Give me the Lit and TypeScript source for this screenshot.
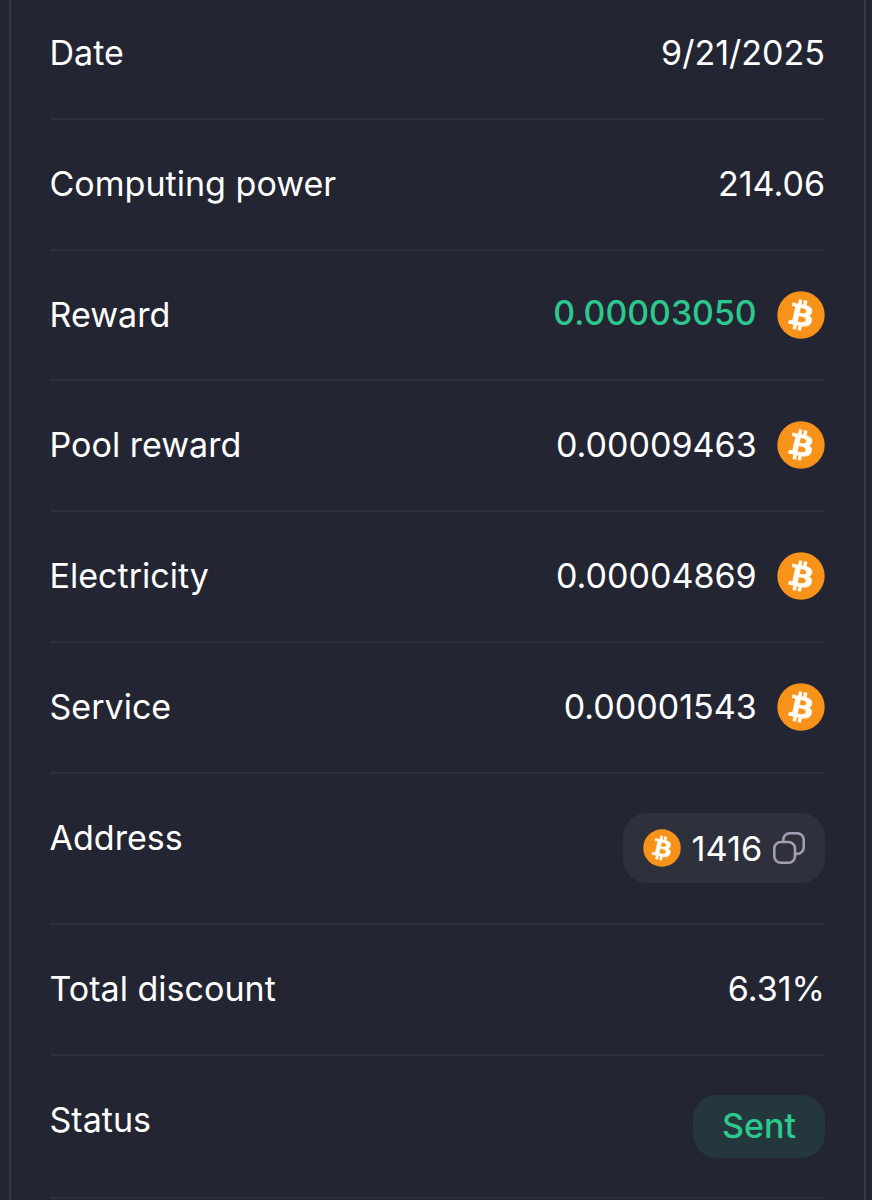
import { LitElement, html, css, nothing } from "lit";
import { customElement, property } from "lit/decorators.js";

@customElement("btc-icon")
class BtcIcon extends LitElement {
  static styles = css`
    :host { display: block; flex: none; }
    svg { display: block; width: 100%; height: 100%; }
  `;
  render() {
    return html`<svg viewBox="0 0 32 32" aria-hidden="true">
      <circle cx="16" cy="16" r="15.8" fill="#f7931a"></circle>
      <path transform="rotate(-2 16 16) translate(-1.45 -0.5) scale(1.07 1.03)" fill="#fffdf6" stroke="#fffdf6" stroke-width="0.4" d="M23.189 14.02c.314-2.096-1.283-3.223-3.465-3.975l.708-2.84-1.728-.43-.69 2.765c-.454-.114-.92-.22-1.385-.326l.695-2.783L15.596 6l-.708 2.839c-.376-.086-.746-.17-1.104-.26l.002-.009-2.384-.595-.46 1.846s1.283.294 1.256.312c.7.175.826.638.805 1.006l-.806 3.235c.048.012.11.03.18.057l-.183-.045-1.13 4.532c-.086.212-.303.531-.793.41.018.025-1.256-.313-1.256-.313l-.858 1.978 2.25.561c.418.105.828.215 1.231.318l-.715 2.872 1.727.43.708-2.84c.472.127.93.245 1.378.357l-.706 2.828 1.728.43.715-2.866c2.948.558 5.164.333 6.097-2.333.752-2.146-.037-3.385-1.588-4.192 1.13-.26 1.98-1.003 2.207-2.538zm-3.95 5.538c-.533 2.147-4.148.986-5.32.695l.95-3.805c1.172.293 4.929.872 4.37 3.11zm.535-5.569c-.487 1.953-3.495.96-4.47.717l.86-3.45c.975.243 4.118.696 3.61 2.733z"></path>
    </svg>`;
  }
}

@customElement("detail-row")
class DetailRow extends LitElement {
  @property() label = "";
  static styles = css`
    :host {
      display: flex;
      justify-content: space-between;
      align-items: flex-start;
      box-sizing: border-box;
      height: 130.83px;
      padding-top: 40px;
      border-bottom: 2px solid #2d2f3b;
    }
    :host([kind="address"]) { height: 151px; }
    :host([kind="status"]) { height: 142.8px; }
    :host([kind="address"]), :host([kind="status"]) { padding-top: 39px; }
    .label { line-height: 48px; }
    :host([kind="address"]) .label, :host([kind="status"]) .label { padding-top: 1px; }
  `;
  render() {
    return html`<span class="label">${this.label}</span><slot></slot>`;
  }
}

interface Entry {
  label: string;
  value: string;
  kind?: "coin" | "reward" | "address" | "status";
}

const entries: Entry[] = [
  { label: "Date", value: "9/21/2025" },
  { label: "Computing power", value: "214.06" },
  { label: "Reward", value: "0.00003050", kind: "reward" },
  { label: "Pool reward", value: "0.00009463", kind: "coin" },
  { label: "Electricity", value: "0.00004869", kind: "coin" },
  { label: "Service", value: "0.00001543", kind: "coin" },
  { label: "Address", value: "1416", kind: "address" },
  { label: "Total discount", value: "6.31%" },
  { label: "Status", value: "Sent", kind: "status" },
];

@customElement("app-root")
class AppRoot extends LitElement {
  static styles = css`
    :host {
      display: block;
      box-sizing: border-box;
      height: 1200px;
      overflow: hidden;
      padding: 0 6px 0 9px;
      background: #242532;
      color: #fff;
      font-family: Inter, sans-serif;
      font-size: 34.05px;
      font-optical-sizing: none;
    }
    .card {
      box-sizing: border-box;
      height: 1200px;
      border: solid #383a47;
      border-width: 0 2px;
      border-left-color: #343642;
      padding: 0 39px 0 38.5px;
      overflow: hidden;
    }
    .list { margin-top: -11.1px; }
    .value { line-height: 48px; }
    .coin { display: flex; align-items: center; gap: 20.3px; line-height: 48px; }
    .coin btc-icon { width: 48px; height: 48px; }
    .reward { color: #2cc88e; font-size: 33.85px; font-weight: 500; line-height: 44px; padding-bottom: 4px; }
    .chip {
      display: flex;
      align-items: center;
      box-sizing: border-box;
      height: 70.5px;
      padding: 0 19.2px 0 20px;
      border-radius: 24px;
      background: #2e303c;
      font-size: 34.4px;
    }
    .chip btc-icon { width: 38px; height: 38px; margin-right: 10px; }
    .copy { width: 34px; height: 34px; margin-left: 9.5px; }
    .pill {
      box-sizing: border-box;
      height: 63px;
      line-height: 62px;
      padding: 0 29px;
      border-radius: 24px;
      background: #24373c;
      color: #2cc88e;
      font-weight: 500;
    }
  `;

  private value(e: Entry) {
    switch (e.kind) {
      case "coin":
        return html`<div class="coin"><span>${e.value}</span><btc-icon></btc-icon></div>`;
      case "reward":
        return html`<div class="coin"><span class="reward">${e.value}</span><btc-icon></btc-icon></div>`;
      case "address":
        return html`<div class="chip">
          <btc-icon></btc-icon><span>${e.value}</span>
          <svg class="copy" viewBox="0 0 34 34" fill="none" stroke="#a09fb4" stroke-width="2.6" aria-hidden="true">
            <rect x="2.3" y="11" width="20.7" height="20.7" rx="6.5"></rect>
            <path d="M11.3 11V8.8A6.5 6.5 0 0 1 17.8 2.3H25.2A6.5 6.5 0 0 1 31.7 8.8V16.2A6.5 6.5 0 0 1 25.2 22.9H23"></path>
          </svg>
        </div>`;
      case "status":
        return html`<div class="pill">${e.value}</div>`;
      default:
        return html`<span class="value">${e.value}</span>`;
    }
  }

  render() {
    return html`<main class="card">
      <div class="list">
        ${entries.map((e) => html`<detail-row label=${e.label} kind=${e.kind ?? nothing}>${this.value(e)}</detail-row>`)}
      </div>
    </main>`;
  }
}
